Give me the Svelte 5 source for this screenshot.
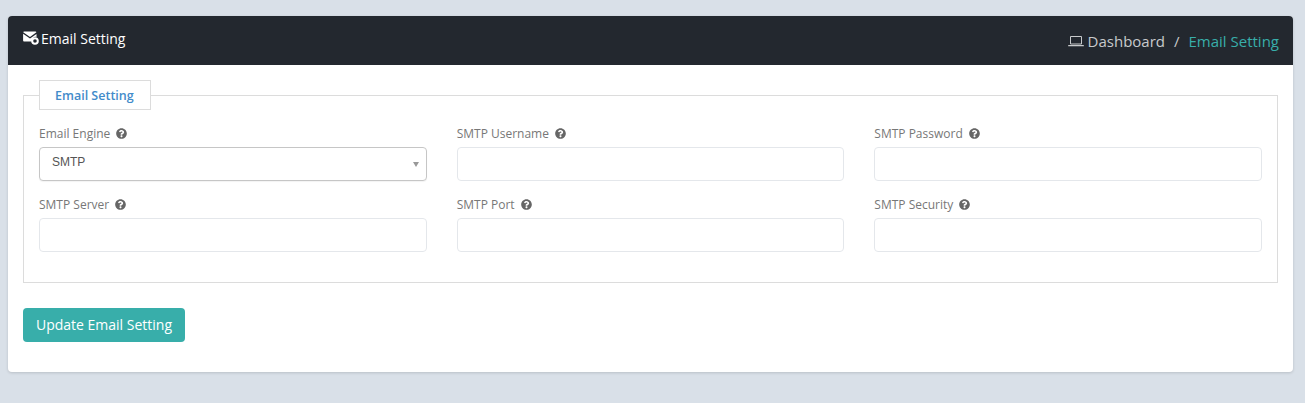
<script>
  const rows = [
    [{ label: 'Email Engine', select: true }, { label: 'SMTP Username' }, { label: 'SMTP Password' }],
    [{ label: 'SMTP Server' }, { label: 'SMTP Port' }, { label: 'SMTP Security' }]
  ];
  const fields = rows.flat();
</script>

<div class="page">
  <section class="card">
    <header class="head">
      <h1 class="title">
        <svg class="mail" viewBox="0 0 16 14" aria-hidden="true">
          <path fill="#fff" d="M1 .5h11.5c.5 0 .8.3.9.7L7 5.9.2 1.2C.3.8.6.5 1 .5zM.1 2.8l6.9 4.7 6.5-4.6v3a4 4 0 0 0-4.6 4.6H1c-.5 0-.9-.4-.9-.9z"/>
          <circle cx="12" cy="10" r="2.8" fill="none" stroke="#fff" stroke-width="2"/>
        </svg>
        Email Setting
      </h1>
      <nav class="crumbs">
        <svg class="laptop" viewBox="0 0 16 12" aria-hidden="true">
          <path fill="none" stroke="#c8cacc" stroke-width="1" d="M2.5 1.5h11v7.5h-11z"/>
          <path fill="none" stroke="#c8cacc" stroke-width="1.4" d="M.2 10.6h15.6"/>
        </svg>
        <span class="home">Dashboard</span>
        <span class="sep">/</span>
        <span class="current">Email Setting</span>
      </nav>
    </header>

    <div class="body">
      <fieldset class="group">
        <legend class="legend">Email Setting</legend>
        <div class="grid">
          {#each fields as f}
            <div class="field">
              <label class="label">
                <span>{f.label}</span>
                <svg class="help" viewBox="0 0 512 512" aria-hidden="true">
                  <path fill="#666" d="M504 256c0 136.997-111.043 248-248 248S8 392.997 8 256C8 119.083 119.043 8 256 8s248 111.083 248 248zM262.655 90c-54.497 0-89.255 22.957-116.549 63.758-3.536 5.286-2.353 12.415 2.715 16.258l34.699 26.31c5.205 3.947 12.621 3.008 16.665-2.122 17.864-22.658 30.113-35.797 57.303-35.797 20.429 0 45.698 13.148 45.698 32.958 0 14.976-12.363 22.667-32.534 33.976C247.128 238.528 216 254.941 216 296v4c0 6.627 5.373 12 12 12h56c6.627 0 12-5.373 12-12v-1.333c0-28.462 83.186-29.647 83.186-106.667 0-58.002-60.165-102-116.531-102zM256 338c-25.365 0-46 20.635-46 46 0 25.364 20.635 46 46 46s46-20.636 46-46c0-25.365-20.635-46-46-46z"/>
                </svg>
              </label>
              {#if f.select}
                <div class="select">
                  <span class="value">SMTP</span>
                  <span class="arrow"></span>
                </div>
              {:else}
                <input class="input" type="text" />
              {/if}
            </div>
          {/each}
        </div>
      </fieldset>
      <button class="btn" type="button">Update Email Setting</button>
    </div>
  </section>
</div>

<style>
  :global(body) {
    margin: 0;
    background: #d9e0e8;
  }
  .page {
    padding: 16px 12px 31px 8px;
    font-family: "Open Sans", sans-serif;
    box-sizing: border-box;
    height: 403px;
  }
  .card {
    background: #fff;
    border-radius: 4px;
    box-shadow: 0 1px 3px rgba(0, 0, 0, 0.15);
    height: 356px;
    overflow: hidden;
  }
  .head {
    height: 49px;
    background: #23282f;
    display: flex;
    justify-content: space-between;
    padding: 0 14px;
    color: #fff;
  }
  .title {
    margin: 0;
    padding-top: 13px;
    font-size: 14px;
    line-height: 19px;
    font-weight: 400;
    display: flex;
    align-items: flex-start;
    gap: 3px;
  }
  .mail {
    width: 16px;
    height: 14px;
    margin-top: 2px;
    margin-left: 1px;
    margin-right: -1px;
  }
  .crumbs {
    display: flex;
    align-items: center;
    padding-top: 1px;
    font-size: 15px;
    color: #c8cacc;
    height: 48px;
  }
  .laptop {
    width: 16px;
    height: 12px;
    margin-right: 4px;
    margin-left: -1px;
  }
  .sep {
    margin: 0 9px;
  }
  .current {
    color: #38aeaa;
  }
  .body {
    padding: 15px 15px 0;
  }
  .group {
    margin: 0;
    padding: 0 15px 15px;
    border: 1px solid #dcdcdc;
    min-width: 0;
    height: 203px;
    box-sizing: border-box;
  }
  .legend {
    margin-left: 0;
    padding: 0 15px 0 15px;
    height: 30px;
    width: 112px;
    box-sizing: border-box;
    border: 1px solid #dcdcdc;
    font-size: 12.5px;
    font-weight: 600;
    line-height: 30px;
    color: #428bca;
    background: #fff;
    white-space: nowrap;
  }
  .grid {
    display: grid;
    grid-template-columns: repeat(3, 1fr);
    column-gap: 30px;
    row-gap: 0;
    padding-top: 14px;
  }
  .field {
    height: 71px;
  }
  .label {
    display: flex;
    align-items: center;
    gap: 6px;
    height: 18px;
    margin-bottom: 5px;
    font-size: 12px;
    color: #777;
  }
  .help {
    width: 11px;
    height: 11px;
    margin-left: 0;
  }
  .input,
  .select {
    display: block;
    width: 100%;
    height: 34px;
    box-sizing: border-box;
    border: 1px solid #e4e7eb;
    border-radius: 4px;
    background: #fff;
    padding: 0 12px;
    margin: 0;
    outline: none;
  }
  .select {
    border-color: #c6c6c6;
    box-shadow: 0 1px 1px rgba(0, 0, 0, 0.05);
    position: relative;
    font-family: "Liberation Sans", Arial, sans-serif;
    font-size: 12px;
    line-height: 28px;
    color: #555;
  }
  .arrow {
    position: absolute;
    right: 7px;
    top: 14px;
    width: 0;
    height: 0;
    border-left: 3px solid transparent;
    border-right: 3px solid transparent;
    border-top: 5px solid #999;
  }
  .btn {
    display: block;
    margin-top: 25px;
    width: 162px;
    height: 34px;
    border: 0;
    border-radius: 4px;
    background: #38aeaa;
    color: #fff;
    font-family: "Open Sans", sans-serif;
    font-size: 14px;
    padding: 0 0 2px;
  }
</style>
